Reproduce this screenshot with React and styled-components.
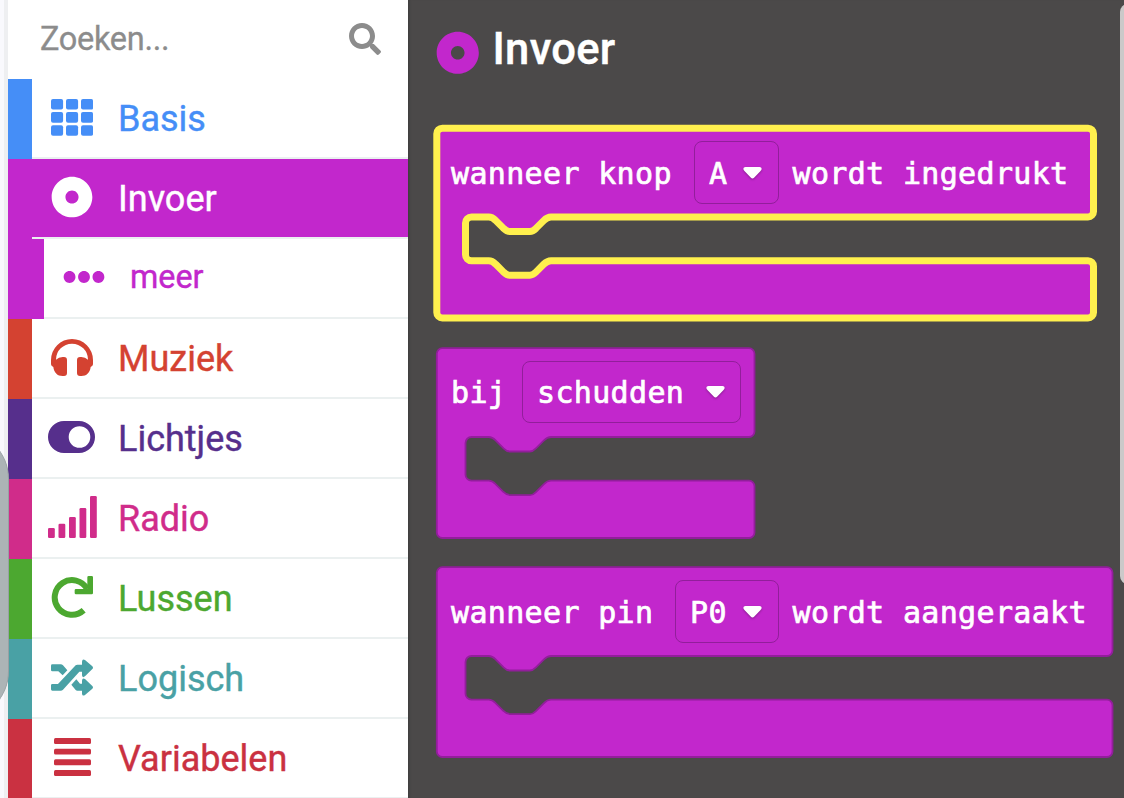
import React from "react";
import styled, { createGlobalStyle } from "styled-components";
import { FaDotCircle, FaEllipsisH, FaSearch } from "react-icons/fa";

const PURPLE = "rgb(194, 39, 204)";
const PURPLE_DARK = "rgb(146, 30, 155)";

const GlobalStyle = createGlobalStyle`
  * { box-sizing: border-box; }
  body { margin: 0; overflow: hidden; font-family: Roboto, "Liberation Sans", sans-serif; }
`;

const Editor = styled.div`
  position: relative;
  display: flex;
  width: 1124px;
  height: 798px;
  overflow: hidden;
  background: #f9f9fd;
`;

const Gutter = styled.div`
  width: 8px;
  flex: none;
  border-right: 4px solid #eeeff1;
`;

const Handle = styled.div`
  position: absolute;
  left: -89px;
  top: 430px;
  width: 98px;
  height: 290px;
  border-radius: 49px;
  background: #acb4b6;
  border-right: 1px solid #97a0a3;
  clip-path: inset(0 0 0 89px);
`;

const Toolbox = styled.nav`
  width: 400px;
  flex: none;
  background: #fff;
`;

const SearchBar = styled.div`
  display: flex;
  align-items: center;
  justify-content: space-between;
  height: 79px;
  padding: 0 27px 1px 32px;
  color: #8c8c8c;
  font-size: 32.5px;
  letter-spacing: -0.3px;
  -webkit-text-stroke: 0.3px #8c8c8c;
  svg { width: 32px; height: 32px; }
`;

const Row = styled.div`
  display: flex;
  height: 80px;
  background: ${(p) => p.$color};
  padding-left: ${(p) => (p.$nested ? 36 : 24)}px;
`;

const RowBody = styled.div`
  display: flex;
  align-items: center;
  flex: 1;
  padding-bottom: 2px;
  border-bottom: 2px solid #ebf0f0;
  background: ${(p) => (p.$active ? p.$color : "#fff")};
  color: ${(p) => (p.$active ? "#fff" : p.$color)};
  font-size: ${(p) => (p.$nested ? 32.3 : 36)}px;
`;

const IconCell = styled.span`
  display: flex;
  justify-content: center;
  width: 80px;
  margin-right: 6px;
  font-size: 42px;
  svg { flex: none; }
`;

const RowLabel = styled.span`
  margin-top: ${(p) => (p.$nested ? 0 : 3)}px;
  -webkit-text-stroke: 0.4px currentColor;
`;

const Flyout = styled.main`
  flex: 1;
  padding: 29px 0 0 28px;
  background: #4b4949;
  box-shadow: inset 3px 0 3px -2px rgba(0, 0, 0, 0.2);
`;

const FlyoutTitle = styled.header`
  display: flex;
  align-items: center;
  height: 46px;
  color: #fff;
  font-size: 43.5px;
  font-weight: 500;
  letter-spacing: 0.3px;
  -webkit-text-stroke: 0.4px #fff;
  svg { color: ${PURPLE}; width: 43.5px; height: 43.5px; margin-top: 1px; -webkit-text-stroke: 0; }
`;

const TitleText = styled.span`
  margin: -5px 0 0 13px;
`;

const BlockList = styled.div`
  display: flex;
  flex-direction: column;
  gap: 29.5px;
  padding: 53px 0 0 1px;
`;

const Block = styled.section`
  position: relative;
  width: ${(p) => p.$width}px;
  height: 190px;
`;

const BlockShape = styled.svg`
  position: absolute;
  inset: 0;
  width: 100%;
  height: 100%;
  overflow: visible;
`;

const BlockHeader = styled.div`
  position: relative;
  display: flex;
  align-items: center;
  height: 89px;
  padding-left: 14px;
  color: #fff;
  font: 30px "DejaVu Sans Mono", monospace;
  letter-spacing: 0.34px;
  white-space: pre;
  -webkit-text-stroke: 0.7px #fff;
`;

const Words = styled.span`
  padding-top: 1px;
  width: ${(p) => (p.$width ? `${p.$width}px` : "auto")};
`;

const Field = styled.div`
  display: flex;
  align-items: center;
  justify-content: space-between;
  width: ${(p) => p.$width}px;
  height: 62.5px;
  margin-right: 14px;
  padding: 1px 15.5px 0 14px;
  border: 1.6px solid ${PURPLE_DARK};
  border-radius: 8px;
`;

const Arrow = styled.svg`
  width: 19px;
  height: 12px;
  margin-top: -1px;
  overflow: visible;
  filter: drop-shadow(0 1px 1px rgba(0, 0, 0, 0.3));
`;

const Scrollbar = styled.div`
  position: absolute;
  right: -12px;
  top: 4px;
  width: 16px;
  height: 580px;
  border-radius: 8px;
  background: #cbc9c9;
`;

const GridIcon = () => (
  <svg width="42" height="37" fill="currentColor">
    {[0, 13.1, 26.2].map((y) =>
      [0, 15, 30].map((x) => <rect key={`${x}-${y}`} x={x} y={y} width="12.1" height="10.6" rx="2" />)
    )}
  </svg>
);

const HeadphonesIcon = () => (
  <svg width="42" height="37" viewBox="153 312 126 111" fill="currentColor">
    <path d="M153 375A63 63 0 0 1 279 375V388Q279 393 272 396C270 413 260 423 244 423H240Q231 423 231 414V375Q231 366 240 366H244Q256 366 264 374A48 48 0 0 0 168 374Q176 366 188 366H192Q201 366 201 375V414Q201 423 192 423H188C172 423 162 413 160 396Q153 393 153 388Z" />
  </svg>
);

const ToggleIcon = () => (
  <svg width="48" height="32" fill="currentColor">
    <path fillRule="evenodd" d="M16 0H31a16 16 0 0 1 0 32H16a16 16 0 0 1 0-32ZM31.5 5.2a10.8 10.8 0 1 0 0 21.6a10.8 10.8 0 1 0 0-21.6Z" />
  </svg>
);

const SignalIcon = () => (
  <svg width="49" height="42" fill="currentColor">
    {[10, 14.2, 21, 30, 42].map((h, i) => (
      <rect key={h} x={i * 10.5} y={42 - h} width="6.8" height={h} rx="1.3" />
    ))}
  </svg>
);

const RedoIcon = () => (
  <svg width="42" height="42" viewBox="21 18 126 126" fill="currentColor">
    <path d="M129.5 57A52 52 0 1 0 119 121" fill="none" stroke="currentColor" strokeWidth="18" />
    <path d="M130 22Q130 18 134 18H143Q147 18 147 22V69Q147 73 143 73H96Q92 73 92 69V61Q92 57 96 57H130Z" />
  </svg>
);

const ShuffleIcon = () => (
  <svg width="42" height="37" viewBox="153 567 126 109" fill="currentColor">
    <path d="M157 641H174L227 585Q229 583 232 583H246V574Q247 564 255 569L277 588Q281 592 277 596L255 618Q247 624 246 615V604H238L189 658Q186 661 182 661H157Q153 661 153 657V645Q153 641 157 641Z" />
    <path d="M157 582H182Q186 582 189 585L202 600L188 615L175 603H157Q153 603 153 599V586Q153 582 157 582Z" />
    <path d="M229 627L240 640H246V631Q247 621 255 626L277 647Q281 651 277 655L255 674Q247 679 246 670V661H232Q229 661 227 659L214 643Z" />
  </svg>
);

const LinesIcon = () => (
  <svg width="37" height="38" fill="currentColor">
    {[0, 10.7, 21.3, 32].map((y) => <rect key={y} y={y} width="37" height="5.9" rx="1.5" />)}
  </svg>
);

const categories = [
  { label: "Basis", color: "rgb(69, 142, 247)", Icon: GridIcon },
  { label: "Invoer", color: PURPLE, Icon: FaDotCircle, active: true },
  { label: "meer", color: PURPLE, Icon: FaEllipsisH, nested: true },
  { label: "Muziek", color: "rgb(212, 66, 49)", Icon: HeadphonesIcon },
  { label: "Lichtjes", color: "rgb(86, 47, 140)", Icon: ToggleIcon },
  { label: "Radio", color: "rgb(208, 44, 138)", Icon: SignalIcon },
  { label: "Lussen", color: "rgb(76, 168, 48)", Icon: RedoIcon },
  { label: "Logisch", color: "rgb(73, 161, 165)", Icon: ShuffleIcon },
  { label: "Variabelen", color: "rgb(202, 49, 65)", Icon: LinesIcon },
];

const blocks = [
  { width: 657, before: "wanneer knop", lead: 243, option: "A", field: 84.5, after: "wordt ingedrukt", selected: true },
  { width: 318, before: "bij", lead: 71, option: "schudden", field: 219 },
  { width: 676, before: "wanneer pin", lead: 224, option: "P0", field: 103.5, after: "wordt aangeraakt" },
];

// Outline of an event block: header bar, open mouth with a notch on both edges, footer bar.
const outline = (w) => {
  const r = 5.5;
  const right = w - 0.5;
  return [
    `M-0.2 ${r + 0.2}a${r} ${r} 0 0 1 ${r} -${r}H${right - r}a${r} ${r} 0 0 1 ${r} ${r}`,
    `V${89 - r}a${r} ${r} 0 0 1 -${r} ${r}H114`,
    "c-3.6 0 -5.5 1.8 -7.3 3.6l-7.3 7.3c-1.8 1.8 -3.2 3.6 -6.5 3.6H73",
    "c-3.6 0 -5.1 -1.8 -6.9 -3.6l-7.3 -7.3c-1.8 -1.8 -3.5 -3.6 -7 -3.6H34.5",
    "a6 6 0 0 0 -6 6V126.7a6 6 0 0 0 6 6H51.8",
    "c3.5 0 5.2 1.8 7 3.6l7.3 7.3c1.8 1.8 3.3 3.6 6.9 3.6H92.9",
    "c3.3 0 4.7 -1.8 6.5 -3.6l7.3 -7.3c1.8 -1.8 3.7 -3.6 7.3 -3.6",
    `H${right - r}a${r} ${r} 0 0 1 ${r} ${r}V${190 - r}a${r} ${r} 0 0 1 -${r} ${r}H${r - 0.2}a${r} ${r} 0 0 1 -${r} -${r}Z`,
  ].join("");
};

function Category({ label, color, Icon, active, nested }) {
  return (
    <Row $color={color} $nested={nested}>
      <RowBody $color={color} $active={active} $nested={nested}>
        <IconCell><Icon /></IconCell>
        <RowLabel $nested={nested}>{label}</RowLabel>
      </RowBody>
    </Row>
  );
}

function EventBlock({ width, before, lead, option, field, after, selected }) {
  return (
    <Block $width={width}>
      <BlockShape aria-hidden="true">
        <path
          d={outline(width)}
          fill={PURPLE}
          stroke={selected ? "#fff04e" : PURPLE_DARK}
          strokeWidth={selected ? 7 : 1.8}
        />
      </BlockShape>
      <BlockHeader>
        <Words $width={lead}>{before}</Words>
        <Field $width={field}>
          <span>{option}</span>
          <Arrow viewBox="0 0 19 12">
            <path d="M2.5 0H16.5Q19 0 18.6 2.3Q18.3 3.4 17.3 4.3L11.3 10.6Q9.5 12.4 7.7 10.6L1.7 4.3Q.7 3.4 .4 2.3Q0 0 2.5 0Z" fill="#fff" />
          </Arrow>
        </Field>
        {after && <Words>{after}</Words>}
      </BlockHeader>
    </Block>
  );
}

export default function App() {
  return (
    <Editor>
      <GlobalStyle />
      <Gutter />
      <Toolbox>
        <SearchBar>
          <span>Zoeken...</span>
          <FaSearch />
        </SearchBar>
        {categories.map((c) => <Category key={c.label} {...c} />)}
      </Toolbox>
      <Flyout>
        <FlyoutTitle>
          <FaDotCircle />
          <TitleText>Invoer</TitleText>
        </FlyoutTitle>
        <BlockList>
          {blocks.map((b) => <EventBlock key={b.before} {...b} />)}
        </BlockList>
      </Flyout>
      <Handle />
      <Scrollbar />
    </Editor>
  );
}
